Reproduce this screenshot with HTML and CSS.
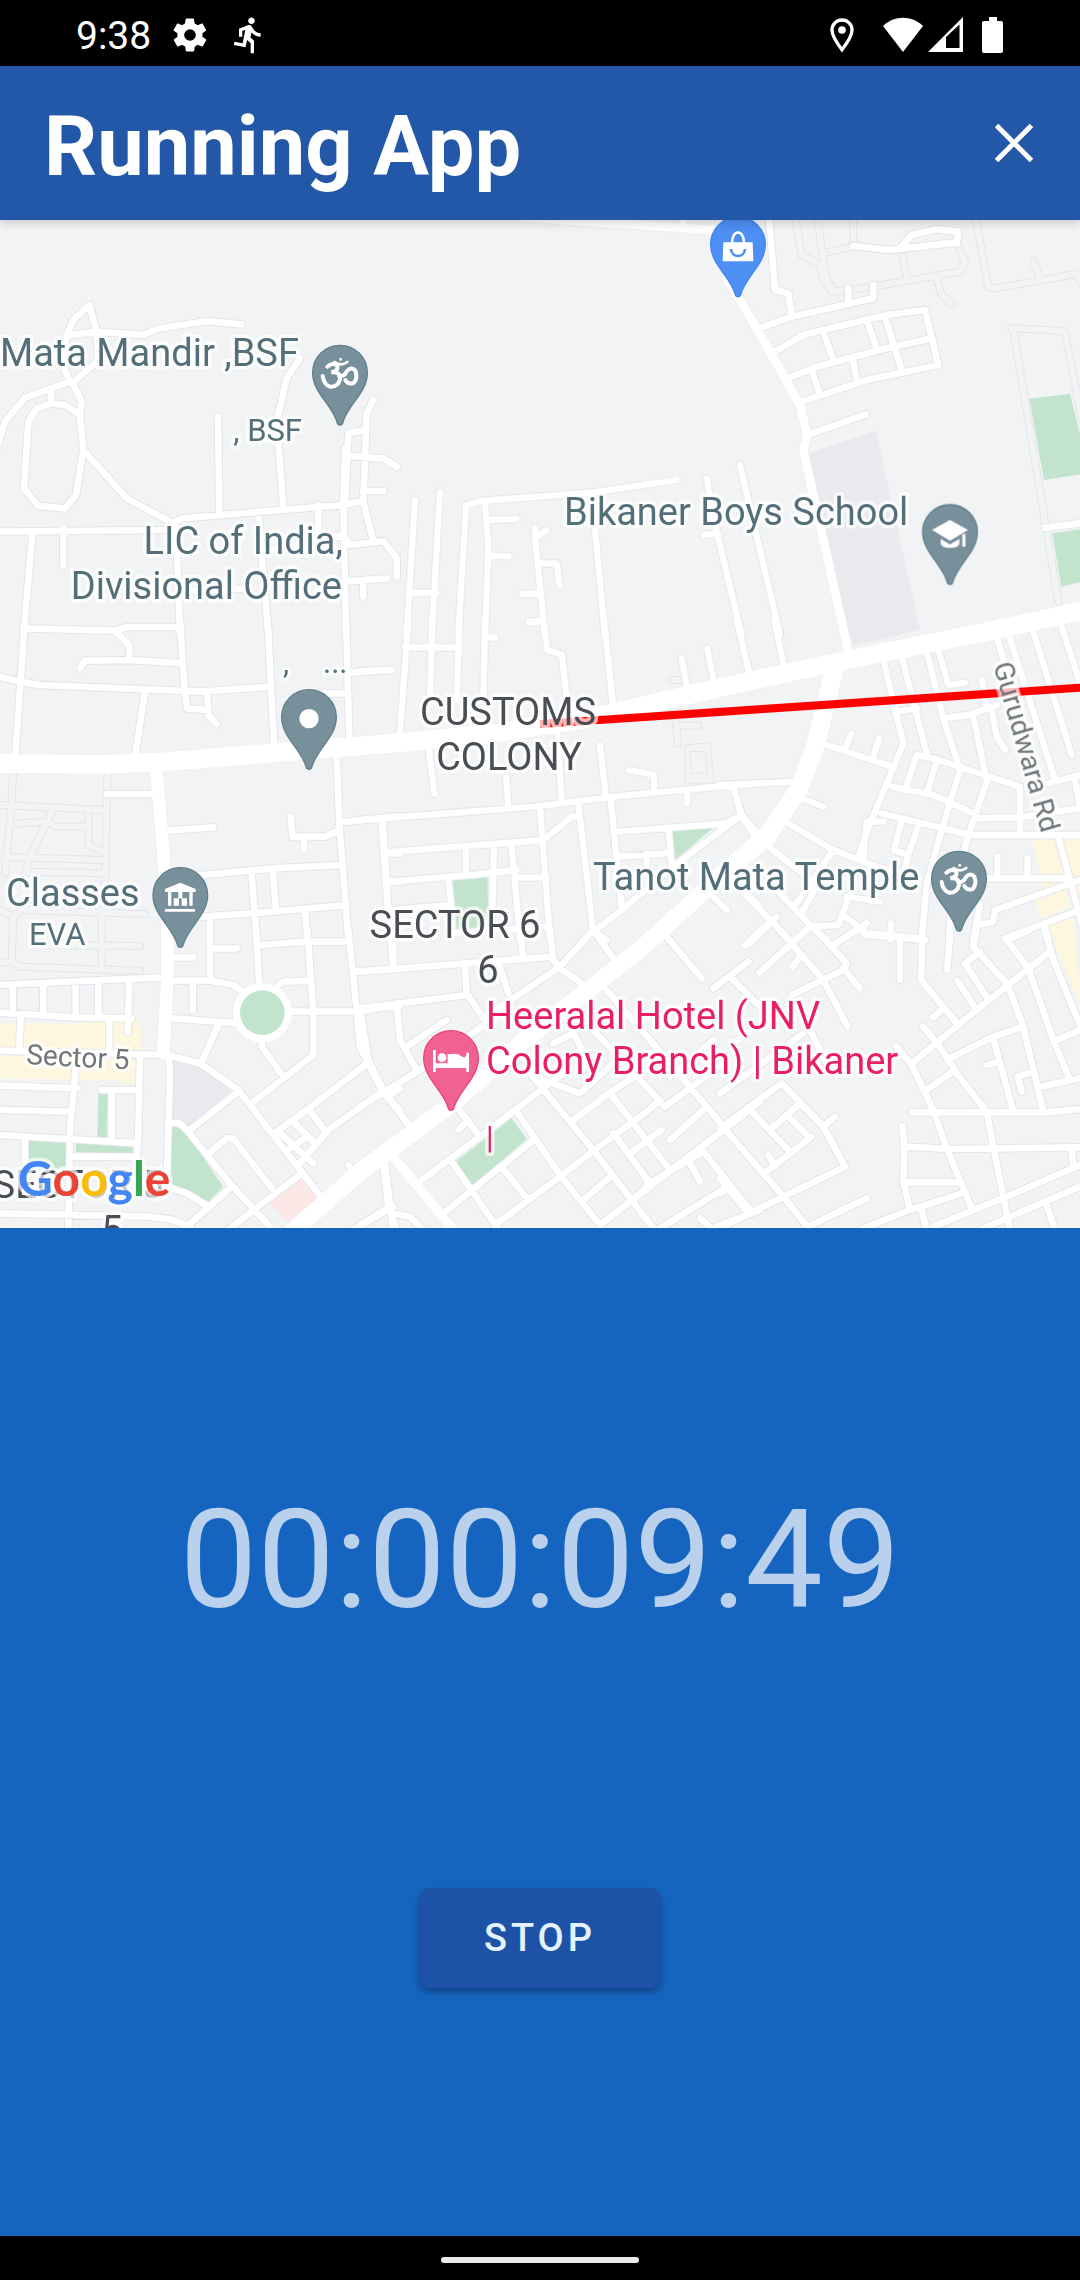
FILE: index.html
```html
<!DOCTYPE html>
<html lang="en">
<head>
<meta charset="utf-8">
<meta name="viewport" content="width=device-width, initial-scale=1">
<title>Running App</title>
<link rel="stylesheet" href="styles.css">
</head>
<body class="screen">
<div class="status">
  <div class="status-group status-left">
    <span class="clock">9:38</span>
    <svg width="40" height="40" viewBox="0 0 24 24" fill="#fff" aria-hidden="true"><path d="M19.4 13c0-.3.1-.6.1-1s0-.7-.1-1l2.1-1.6c.2-.2.2-.4.1-.6l-2-3.500c-.1-.2-.4-.3-.6-.2l-2.500 1c-.5-.4-1.100-.7-1.700-1l-.4-2.600c0-.2-.2-.4-.5-.4h-4c-.2 0-.4.2-.5.4l-.4 2.600c-.6.3-1.200.6-1.700 1l-2.500-1c-.2-.1-.5 0-.6.2l-2 3.500c-.1.2-.1.400.1.600L4.500 11c0 .3-.1.600-.1 1s0 .7.1 1l-2.100 1.600c-.2.2-.2.4-.1.600l2 3.500c.1.2.4.3.600.2l2.500-1c.5.4 1.100.7 1.700 1l.4 2.600c0 .2.2.4.5.4h4c.2 0 .4-.2.5-.4l.4-2.600c.6-.3 1.200-.6 1.700-1l2.500 1c.2.1.5 0 .6-.2l2-3.500c.1-.2.1-.4-.1-.6zM12 15.500a3.500 3.500 0 1 1 0-7 3.500 3.500 0 0 1 0 7z"/></svg>
    <svg width="40" height="40" viewBox="0 0 24 24" fill="#fff" aria-hidden="true"><path d="M13.490 5.480c1.100 0 2-.9 2-2s-.9-2-2-2-2 .9-2 2 .9 2 2 2zm-3.600 13.900l1-4.400 2.100 2v6h2v-7.500l-2.100-2 .6-3c1.300 1.500 3.300 2.500 5.500 2.500v-2c-1.900 0-3.500-1-4.300-2.400l-1-1.600c-.4-.6-1-1-1.700-1-.3 0-.5.1-.8.1l-5.200 2.200v4.700h2v-3.400l1.800-.7-1.600 8.100-4.900-1-.4 2z"/></svg>
  </div>
  <div class="status-group">
    <svg class="status-pin" width="40" height="42" viewBox="0 0 24 24" fill="none" stroke="#fff" stroke-width="2" aria-hidden="true"><path d="M12 20.800C8.500 16.300 6 12.600 6 9a6 6 0 0 1 12 0c0 3.600-2.500 7.300-6 11.800z"/><circle cx="12" cy="9" r="2.300" fill="#fff" stroke="none"/></svg>
    <svg width="42" height="36" viewBox="0 0 42 36" fill="#fff" aria-hidden="true"><path d="M1 9C12-2 30-2 41 9L21 35z"/></svg>
    <svg width="36" height="36" viewBox="0 0 36 36" aria-hidden="true"><path d="M0 35L35 0v35z" fill="#fff"/><path d="M18 20L31.500 7.500V31H18z" fill="#000"/></svg>
    <svg class="status-battery" width="22" height="38" viewBox="0 0 22 38" fill="#fff" aria-hidden="true"><path d="M7 1h8v4h4a2 2 0 0 1 2 2v28a2 2 0 0 1-2 2H2a2 2 0 0 1-2-2V7a2 2 0 0 1 2-2h5z"/></svg>
  </div>
</div>

<header class="appbar">
  <h1 class="appbar-title">Running App</h1>
  <button class="appbar-close" type="button" aria-label="Close">
    <svg width="38" height="38" viewBox="0 0 38 38" stroke="#fff" stroke-width="5" aria-hidden="true"><path d="M1.500 1.500l35 35M36.500 1.500l-35 35"/></svg>
  </button>
</header>

<section class="map" aria-label="Map">
<svg class="map-canvas" viewBox="0 220 1080 1008" preserveAspectRatio="xMidYMid slice">
<defs>
  <!-- Paths and outlined lanes that carry no road surface -->
  <g id="lanes">
    <path transform="translate(0 1860)" d="M40 460L30 600 15 760M0 555L320 570M322 470L315 790M155 575L85 720 70 790M30 612L140 605 165 620H265M265 575V675L310 695M0 710L310 720M80 755L310 760M0 870L40 890 60 870 435 882M40 890L35 1020M305 870V1050M0 1030L30 1025 60 1040 420 1052M100 975L420 978"/>
    <path transform="translate(1080 1860)" d="M945 270L953 370M960 317H1015M935 180H965"/>
    <path transform="translate(2160 645)" d="M225 0L245 120 300 150 310 190 335 230 380 225M290 0L310 130 320 190 340 230M305 115L400 95V10M380 228L720 170 735 140 710 80M545 110L560 185M650 190L665 240 695 267M765 0L805 215 825 220 1080 175M940 135L960 190M1070 180L1090 210M875 340L980 345 1035 350 1090 640M880 345L1015 1160"/>
  </g>
  <g id="streets">
    <path transform="translate(0 645)" d="M200 362L220 315 268 270 290 350M200 362L290 350 430 360 470 342 622 318 724 328M290 350L295 430 280 450 215 505M200 362L185 440 210 500M-10 700L15 620 75 548 210 500M215 500L245 560 240 600 250 705 228 840 195 880 115 873 72 820 85 620 110 580 155 565 195 570 240 600M153 520V565M250 705L380 850 520 925 545 910 1030 870 1080 860M0 950L500 945 520 925M98 950L70 1260M190 940V1050M654 605L658 900M900 430L860 490 830 620 850 880M775 890L805 1260M955 870V965H1030M528 940L540 1260M1120 555L1100 595 1090 860 1120 980M1035 870L1045 655 1095 645M1035 700L1030 870 1038 1260M1035 722L1150 730 1190 755M1090 828H1150M1030 960L1050 990 1150 978 1190 1030V1085M1030 1100L1160 1090M1090 1100V1145M540 1130L740 1120M780 1010L900 990M70 1240L345 1247 380 1236H545"/>
    <path transform="translate(1080 645)" d="M165 855L140 1260M240 830L215 1260M145 1133H230M295 1260L318 870 375 857 700 832 950 795M375 857L385 1000 375 1260M390 915L470 912M390 1022L445 1024M525 940V970L555 1260M525 970L560 945M535 1045H590L598 1110M488 1137H545M508 1222L550 1217M695 840L735 1260M1040 790L1070 950 1145 1260M1030 960L1075 955M1140 750L1260 1260M740 0V10M815 0V30M970 0V40"/>
    <path transform="translate(2160 645)" d="M145 -20L165 225 205 235 215 300M115 340L215 305 460 250V210M385 220V260M155 415L250 360 310 345 500 300 615 285 655 450 440 495 230 565M190 495L290 455 500 400 635 370M310 350L340 435M440 315L470 400M495 305L545 465M275 465L300 540M398 430L412 500M262 660L437 598M400 93L510 105 710 82M540 100L575 60 650 42 715 50 710 85M975 938L1080 925"/>
    <path transform="translate(0 1860)" d="M75 0L62 180 45 420M540 0L548 130 555 215 562 265 625 270 620 215M625 270V285L650 312M345 33L388 75V115M240 145L255 122 390 120 545 130M0 170L60 185 120 195 600 215 810 200M435 215L405 410M803 0L822 370M1038 0L1048 350M1045 158L1175 150M950 220H1040M320 522H460M500 632L640 622M872 590L878 650H975L1020 630M912 650V690M1010 410L1018 610 1045 960M1020 607L1200 588M500 775L820 745 1025 735M755 765L770 960M818 750L828 870M600 890L760 880 1040 855M915 870L922 960M630 890V960M1148 600L1165 870M1160 700H1200M1165 785H1200"/>
    <path transform="translate(1080 1860)" d="M145 0L120 335M217 0L210 240M298 0L290 240M135 82H300M375 0L370 240M380 52H405M508 5H550L562 90 605 103 620 230M732 0L758 250M965 115L980 195M1042 85L1060 180M0 153L95 150M205 380L223 520M438 470L445 560M593 340L605 550M720 375L738 530M805 450L882 465V510M982 510V550M0 600L520 560 760 530 1120 495 1200 490M65 600L75 760 90 960M75 697L550 660 635 590 660 590M540 560L570 960M655 550L700 940M752 540L785 870M1120 500L1145 590 1200 670M1145 585L1100 610 770 635M1145 585L945 735 785 870 700 935 740 960M925 625L935 735M775 710L930 700M860 700V740M88 785L330 765 470 750M318 690V765M402 680L395 930M455 680L480 960M470 772H560M265 780L275 870M95 870L270 855M270 940L560 920M1060 830L1100 870M1130 790L1200 860"/>
    <path transform="translate(2160 1860)" d="M50 0L88 160M163 0L190 130M492 125L525 270 550 370 450 610 415 710M545 110L620 400M620 95L670 295 720 450M655 90L685 195 735 188M785 180L800 265M530 275L590 265M830 50L880 220M865 40L1005 480M935 20L1055 405M1020 5L1090 220M670 295L745 285 830 255M760 290L800 480M815 270L830 350 855 390M305 370L515 440M395 340L375 385M477 355L460 410M555 510L590 405 640 415 900 500V640M515 500L640 525 760 580M650 425L620 520M720 450L665 630 620 790 605 960M800 485L740 660 725 720M485 580L750 645H1080M545 600L522 690 565 705 595 615M565 705L555 745M765 595L900 592 1080 565M985 490L1080 465M1065 480L1080 560M245 535L310 560M0 495L230 485M40 500L65 585 130 660M0 620L65 585M205 610L330 685 415 720 560 770M145 680L260 770M340 690L230 850M310 760L245 880M40 790L210 960M150 910L90 970M180 820L270 915 320 960M380 830L480 845M390 820L355 915 270 920 225 960M370 885L440 940 600 955M512 910V960M430 710L440 605H490M832 710V770M922 715V770M800 775H1040M1015 650L1085 910M775 915L820 905 825 870 1080 780M855 955L1080 870M780 850L760 960M690 890V960M970 910L985 960"/>
    <path transform="translate(0 2790)" d="M505 380L510 420 500 770M0 165L310 150 500 142M500 152H630L700 165 735 190M520 82H580M578 160V240M630 0V150M640 55H710M768 0L778 170M780 45L920 35H1030M922 0L940 250V375L755 520M830 170L850 155 935 152M1045 0L1070 240 1080 350 1150 490 1200 540M1070 125L1200 115M1180 0V110M870 245H1070L1200 225M520 265L715 280M655 285L605 395M785 330V350L850 440M500 375L600 400 715 480 970 810M715 485L570 600M510 578L540 580 560 600 690 760 810 890M0 248L220 262 395 265M38 170V250M130 165V250M227 160V260M295 155V250M388 155L383 305M62 255L58 360M328 265V370M0 362L500 375M420 380L415 600 410 690M227 410L210 600 205 900M0 467L230 475M0 540L215 545M0 615L415 640M305 480H420M335 490V625M225 680H410M75 625V700M0 850L450 860 520 870 570 890M500 770L560 790 625 830M555 895L690 775M690 895L905 730M825 608L920 540 1095 405M895 705L985 600 1140 490M870 655L915 625M885 580L945 640M925 535L980 610M835 605L940 700M1165 500L1200 475M815 775L700 625 680 625 625 670M1150 700L1165 830 1190 900M1060 900L1180 830M1045 705L1065 735"/>
    <path transform="translate(1080 2790)" d="M0 125L320 100 575 80M90 0L100 110M480 0L490 85M570 0L580 90 600 115 680 170M420 110L445 190M370 265L600 110 700 0 770 100M920 20L1025 145M315 110L320 190 370 265M0 235L320 195M110 220L120 330 170 420M0 240L25 390 75 490 150 590M0 530L180 420 380 280M140 350L260 270M740 180L870 330 1040 530 1100 600M510 430L700 660 880 895M290 530L360 620M295 600L325 570M185 750L360 620 550 475 610 430M470 545L600 735 720 885M250 850L515 635M275 695L410 890M425 710L505 810M405 885L600 740 690 670 860 545 900 510M550 450L660 490 760 400M720 885L1090 600 1200 515M640 570L760 480 840 430 930 370M750 490L930 720M860 470L915 530 1090 400M810 670L905 600M760 610L870 760M860 765L1030 665M665 815L750 740M815 810L870 765M930 630L1040 530M900 895L1110 765M1030 665L1170 840M985 690L1020 755M1070 890L1200 840M1020 865L1060 900M1060 175L1165 95M1110 140L1210 240M1155 45L1200 0M580 340L640 310 690 400M75 700L100 900M0 885L90 830M100 850L150 860 190 900M930 440L1060 330M700 300L860 470"/>
    <path transform="translate(2160 2790)" d="M75 45L170 -40M118 128L260 0M170 -10L310 150 383 290M280 -10L380 100 370 120 215 195M340 45L440 -20M370 115L420 175M240 80L218 110M420 0L440 15 615 30M540 30V150M607 0L603 150 715 285M512 0V20M690 0L682 120M770 0L760 50 865 165M780 65L735 100 805 210M712 152L770 240M665 240L640 262M575 400L770 240 990 65M860 30L930 0M860 30L925 115M610 290L655 345 710 430 800 545 820 650 870 900M530 350L575 405 640 540 680 655 755 835M620 480L705 420M690 385L820 320 910 290M865 170L910 290 970 545M925 115L1000 330 1050 450M1000 335L1080 300M975 0L1000 90 1090 310M960 470L1080 445M820 325L880 545M800 405L830 398M905 485L893 440 940 425M578 547H980L1080 537M547 590L553 650 550 755 570 840M550 650L700 657 1080 652M1055 655L1060 710M560 757H715M430 895L570 840 725 790M605 840L620 900M640 890L860 800 1080 705M790 895L1080 770M980 825L1005 900M0 595L185 460 310 590 375 710 190 800 0 895M345 560L315 585M0 580L190 800 270 900M265 890L440 805M95 545L205 660M150 600L240 520M205 560L265 620M275 620L140 725M145 675L160 700M0 745L85 850M0 790L25 770M265 290L320 400M250 310L0 490M40 340L110 290"/>
  </g>
  <g id="avenues">
    <path stroke-width="26" transform="translate(2160 645)" d="M20 190L110 340 240 570 262 660 250 705 385 1310"/>
    <path stroke-width="26" transform="translate(1080 645)" d="M340 -10L600 15 1060 45"/>
    <path stroke-width="28" transform="translate(1080 2790)" d="M100 680L280 900"/>
    <path stroke-width="38" transform="translate(0 1860)" d="M468 440L490 700 502 930V1080L490 1300"/>
    <path stroke-width="52" transform="translate(1080 2790)" d="M1225 -290L1080 -160 850 50 500 325 290 510 0 725 -220 920"/>
    <path stroke-width="56" transform="translate(2160 1860)" d="M345 140L285 380 235 510 140 650 0 770"/>
    <path stroke-width="56" transform="translate(0 1860)" d="M-40 430L320 433 500 425 1200 368 1500 338 1780 292 2160 203 2540 120 2960 35 3280 -35"/>
    <circle stroke-width="26" cx="787" cy="3038" r="76"/>
  </g>
  <path id="pin" d="M-7 152C-22 93-82 60-82-2A82 82 0 1 1 82-2C82 60 22 93 7 152Q0 158-7 152Z"/>
  <g id="om" fill="none" stroke="#fff" stroke-width="12" stroke-linecap="round">
    <path d="M-38-20Q-22-34-9-24Q-2-8-26-3Q2-6 0 18Q-6 42-30 40Q-48 34-52 8M-3 8Q14 10 20-6Q34-22 46-8Q54 14 42 28Q26 36 16 20"/>
    <path d="M-16-34Q3-20 22-34" stroke-width="8"/><circle cx="2" cy="-42" r="2" stroke-width="5"/>
  </g>
</defs>

<rect x="-2000" y="-2000" width="5000" height="5000" fill="#f1f3f4"/>
<g transform="scale(.333333)">
  <g fill="#e8eaed">
    <path transform="translate(2160 645)" d="M265 715L468 648 600 1245 397 1292Z"/>
    <path transform="translate(0 2790)" d="M518 390L600 405 700 480 565 587 515 570Z"/>
  </g>
  <g fill="#c3e4cc">
    <path transform="translate(2160 645)" d="M928 551L1050 537 1085 680V778L972 795ZM997 955L1085 942V1100L1024 1116Z"/>
    <path transform="translate(1080 1860)" d="M937 632L1062 622 945 720ZM277 782L382 772 386 925 290 928Z"/>
    <path transform="translate(0 2790)" d="M87 632L198 638V720H87ZM228 640L398 652V672L228 666ZM295 487H323L320 622 292 620ZM515 590Q545 590 570 625L670 770 625 815 565 780 513 765Z"/>
    <path transform="translate(1080 2790)" d="M287 695L455 565 500 627 338 765Z"/>
    <circle cx="787" cy="3038" r="72"/>
  </g>
  <path transform="translate(0 2790)" fill="#fce8e6" d="M808 820L900 742 955 805 865 880Z"/>
  <g fill="#fef7e0">
    <path transform="translate(0 2790)" d="M0 280L250 280V274H397V266H413V290H425V360H0ZM0 378L410 390V462H372V452L0 445Z"/>
    <path transform="translate(2160 1860)" d="M937 660L1000 655 1050 860 965 895 945 840 970 800ZM1030 655H1085V760L1060 780ZM1070 795H1085V820H1070ZM985 915L1060 890 1085 1165 1025 1025 990 930Z"/>
  </g>
  <use href="#lanes" class="lane-casing"/>
  <use href="#lanes" class="lane-fill"/>
  <path class="outline" transform="translate(2055 2235)" d="M0 0L75 -7 87 115H0ZM15 20H62L67 85H20Z"/>
  <use href="#streets" class="street-casing"/>
  <g class="avenue-casing"><use href="#avenues"/></g>
  <use href="#streets" class="street-fill"/>
  <g class="avenue-fill"><use href="#avenues"/></g>
  <circle cx="787" cy="3038" r="67" fill="#c3e4cc"/>
</g>

<path d="M540 724L1090 687" stroke="#f00" stroke-width="8" fill="none"/>

<g transform="scale(.333333)">
  <g class="pin-civic">
    <g transform="translate(1020 1120)"><use href="#pin"/><use href="#om"/></g>
    <g transform="translate(2877 2638)"><use href="#pin"/><use href="#om"/></g>
    <g transform="translate(927 2153)"><use href="#pin"/><circle cy="3" r="29" fill="#fff" stroke="none"/></g>
    <g transform="translate(2850 1598)"><use href="#pin"/><path class="glyph" d="M-54-8L0-38 54-8 0 24ZM-28 19L0 35 28 19V34Q24 46 0 46T-28 34ZM37 4H46V42H37Z"/></g>
    <g transform="translate(541 2687)"><use href="#pin"/><path class="glyph" d="M0-39L46-20V-11H-46V-20ZM-37-12H-27V30H-37ZM27-12H37V30H27ZM-6-11H6V8H20V30H4V8H-4V30H-20V8H-6ZM-37 30V8H-28V30ZM-46 40H44V48H-46Z"/></g>
  </g>
  <g class="pin-shop" transform="translate(2214 735)"><use href="#pin"/><path class="glyph" d="M-44-8H44L46 49H-46Z"/><path d="M-18-6C-18-48 18-48 18-6" fill="none" stroke="#fff" stroke-width="8"/><path d="M-21 12C-19 40 19 40 21 12" fill="none" stroke="#4e8ff4" stroke-width="8"/></g>
  <g class="pin-hotel" transform="translate(1353 3176)"><use href="#pin"/><path class="glyph" d="M-54-26H-46V14H46V-18H54V40H46V28H-46V40H-54ZM-10-14H5C32-18 34 8 48-12V14H-10Z"/><circle cx="-27" cy="-3" r="13" fill="#fff" stroke="none"/></g>
</g>

<g class="labels">
  <g class="poi">
    <text x="0" y="366">Mata Mandir ,BSF</text>
    <text x="343" y="554" text-anchor="end">LIC of India,</text>
    <text x="342" y="599" text-anchor="end">Divisional Office</text>
    <text x="564" y="525">Bikaner Boys School</text>
    <text x="593" y="890">Tanot Mata Temple</text>
    <text x="6" y="906">Classes</text>
    <g class="small">
      <text x="302" y="441" text-anchor="end">, BSF</text>
      <text x="283" y="673">,</text>
      <text x="323" y="673">...</text>
      <text x="29" y="945">EVA</text>
    </g>
  </g>
  <g class="area">
    <text x="508" y="725" text-anchor="middle">CUSTOMS</text>
    <text x="509" y="770" text-anchor="middle">COLONY</text>
    <text x="455" y="938" text-anchor="middle">SECTOR 6</text>
    <text x="488" y="983" text-anchor="middle">6</text>
    <text x="78" y="1198" text-anchor="middle">SECTOR 5</text>
    <text x="112" y="1243" text-anchor="middle">5</text>
  </g>
  <g class="road">
    <text transform="translate(26 1064) rotate(3)">Sector 5</text>
    <text transform="translate(993 665) rotate(74)">Gurudwara Rd</text>
  </g>
  <g class="hotel">
    <text x="486" y="1029">Heeralal Hotel (JNV</text>
    <text x="486" y="1074">Colony Branch) | Bikaner</text>
    <text class="small" x="486" y="1148">|</text>
  </g>
  <text class="brand" x="18" y="1196"><tspan fill="#4285f4">G</tspan><tspan fill="#ea4335">o</tspan><tspan fill="#fbbc04">o</tspan><tspan fill="#4285f4">g</tspan><tspan fill="#34a853">l</tspan><tspan fill="#ea4335">e</tspan></text>
</g>
</svg>
</section>

<main class="panel">
  <time class="timer">00:00:09:49</time>
  <button class="stop" type="button">STOP</button>
</main>

<footer class="navbar"><div class="handle"></div></footer>
</body>
</html>
```
FILE: styles.css
```css
* { box-sizing: border-box; }

.screen {
  display: grid;
  grid-template-rows: 66px 154px minmax(0, 1fr) minmax(0, 1fr) 44px;
  height: 100vh;
  margin: 0;
  background: #000;
  color: #fff;
  font-family: Roboto, "Noto Sans", sans-serif;
}

/* System status bar */
.status {
  display: flex;
  align-items: center;
  justify-content: space-between;
  padding: 4px 76px 0;
}
.status-group { display: flex; align-items: center; gap: 4px; }
.status-left { gap: 19px; }
.clock { padding-top: 2px; font-size: 39px; line-height: 46px; }
.status-pin { margin-right: 16px; }
.status-battery { margin-left: 14px; }

/* App bar */
.appbar {
  position: relative;
  z-index: 1;
  display: flex;
  align-items: center;
  justify-content: space-between;
  padding: 0 29px 0 44px;
  background: #2358a9;
  box-shadow: 0 2px 10px rgba(0, 0, 0, .2);
}
.appbar-title {
  margin: 0;
  padding-top: 7px;
  font-size: 83px;
  font-weight: 700;
  line-height: 98px;
}
.appbar-close {
  display: flex;
  padding: 18px;
  border: 0;
  background: none;
}

/* Map */
.map { display: flex; overflow: hidden; background: #f1f3f4; }
.map-canvas { flex: 1; width: 100%; height: 100%; }

.lane-casing, .lane-fill, .street-casing, .street-fill,
.avenue-casing, .avenue-fill {
  fill: none;
  stroke-linecap: round;
  stroke-linejoin: round;
}
.lane-casing { stroke: #e3e5e8; stroke-width: 24px; }
.lane-fill { stroke: #f1f3f4; stroke-width: 18px; }
.outline { fill: none; stroke: #e3e5e8; stroke-width: 3px; }
.street-casing { stroke: #e1e2e7; stroke-width: 25px; }
.street-fill { stroke: #fff; stroke-width: 20px; }
.avenue-casing { stroke: #fff; filter: drop-shadow(0 0 1px #c4c6cc); }
.avenue-fill { stroke: #fff; }

.pin-civic { fill: #78909c; stroke: #5f7f8c; stroke-width: 4px; }
.pin-shop { fill: #4e8ff4; stroke: #4285f4; stroke-width: 4px; }
.pin-hotel { fill: #f06292; stroke: #ec407a; stroke-width: 4px; }
.glyph { fill: #fff; fill-rule: nonzero; stroke: none; }

.labels text {
  font-size: 38px;
  paint-order: stroke;
  stroke: rgba(255, 255, 255, .7);
  stroke-width: 7px;
  stroke-linejoin: round;
}
.poi { fill: #546e7a; }
.area { fill: #4a4e54; }
.hotel { fill: #e91e63; }
.road { fill: #70757a; }
.labels .small text, .labels .small { font-size: 31px; }
.labels .road text { font-size: 28px; }
.labels .brand {
  font-family: Lato, Roboto, sans-serif;
  font-size: 48px;
  font-weight: 700;
}

/* Timer panel */
.panel {
  display: flex;
  flex-direction: column;
  align-items: center;
  justify-content: space-evenly;
  padding-top: 4px;
  background: #1565c0;
}
.timer {
  padding-top: 8px;
  color: rgba(255, 255, 255, .7);
  font-size: 138px;
  line-height: 184px;
}
.stop {
  min-width: 242px;
  height: 100px;
  margin: 8px 0 20px;
  padding: 0 42px;
  border: 0;
  border-radius: 10px;
  background: #1e52a7;
  box-shadow: 0 4px 6px rgba(0, 0, 0, .3);
  color: #e3f2fd;
  font: 500 38px/46px Roboto, "Noto Sans", sans-serif;
  letter-spacing: 4px;
}

/* System navigation */
.navbar { display: flex; align-items: center; justify-content: center; padding-top: 4px; }
.handle { width: 198px; height: 6px; border-radius: 3px; background: #ebebeb; }
```
